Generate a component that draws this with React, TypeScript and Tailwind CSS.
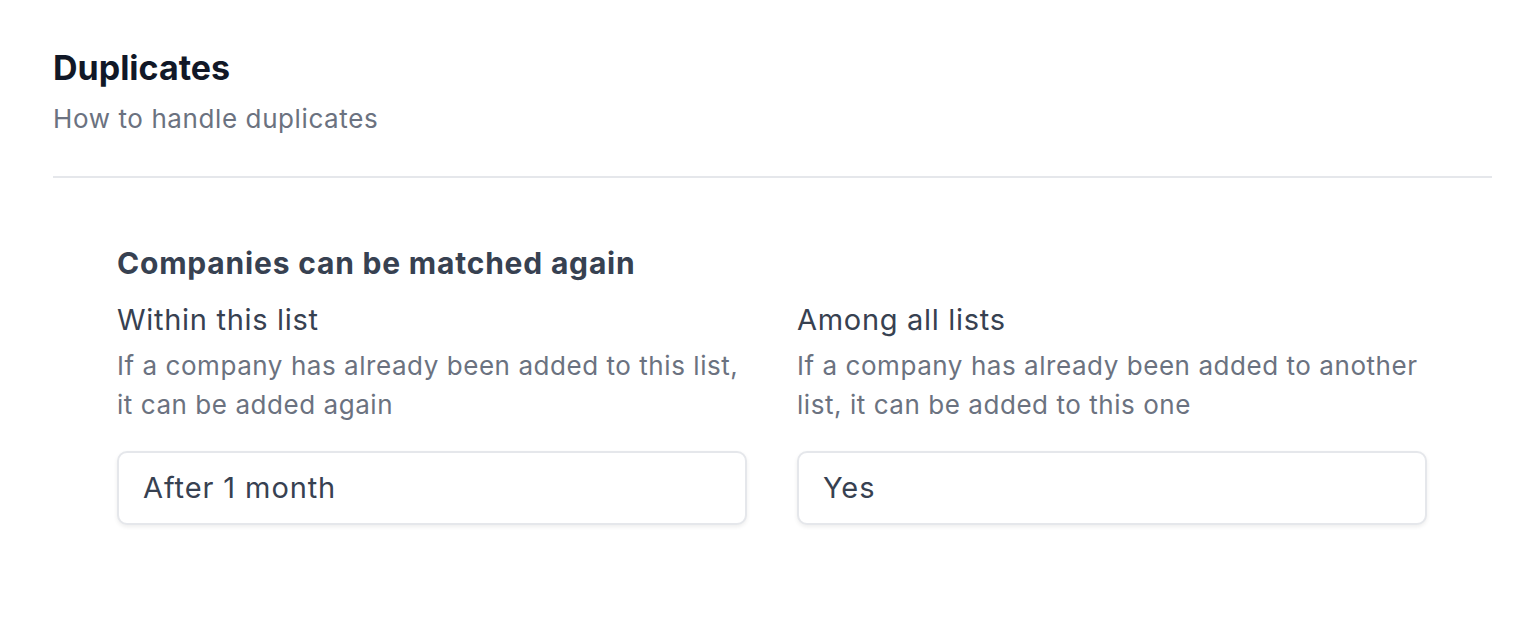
import React from "react";

function Field({
  label,
  lines,
  value,
}: {
  label: string;
  lines: string[];
  value: string;
}) {
  return (
    <div className="flex flex-col">
      <div className="text-[29px] leading-[36px] tracking-[0.7px] text-[#374151]">{label}</div>
      <div className="mt-[8px] text-[26px] leading-[39px] tracking-[0.55px] text-[#6b7280] whitespace-nowrap">
        {lines[0]}
        <br />
        {lines[1]}
      </div>
      <div className="mt-[27px] h-[74px] rounded-[10px] border-2 border-[#e5e7eb] bg-white px-[24px] py-[17px] shadow-[0_2px_4px_rgba(0,0,0,0.07)]">
        <div className="text-[29px] leading-[36px] tracking-[0.9px] text-[#374151]">{value}</div>
      </div>
    </div>
  );
}

export default function App() {
  return (
    <div
      className="min-h-[620px] w-[1530px] bg-white pl-[53px] pr-[38px] pt-[48px]"
      style={{ fontFamily: "Inter, 'Noto Sans', sans-serif" }}
    >
      <h1 className="text-[34px] font-bold leading-[40px] text-[#111827]">Duplicates</h1>
      <p className="mt-[13px] text-[26px] leading-[36px] tracking-[0.6px] text-[#6b7280]">
        How to handle duplicates
      </p>
      <div className="mt-[39px] h-[2px] bg-[#e5e7eb]" />
      <div className="px-[64px] pt-[67px]">
        <h2 className="text-[30px] font-bold leading-[36px] tracking-[0.8px] text-[#374151]">
          Companies can be matched again
        </h2>
        <div className="mt-[21px] grid grid-cols-[630px_630px] gap-x-[50px]">
          <Field
            label="Within this list"
            lines={["If a company has already been added to this list,", "it can be added again"]}
            value="After 1 month"
          />
          <Field
            label="Among all lists"
            lines={["If a company has already been added to another", "list, it can be added to this one"]}
            value="Yes"
          />
        </div>
      </div>
    </div>
  );
}
